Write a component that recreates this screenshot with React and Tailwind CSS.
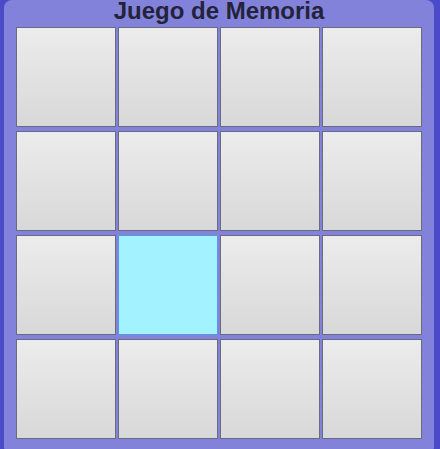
export default function App() {
  const cells = Array.from({ length: 16 }, (_, i) => i);
  return (
    <div className="min-h-[449px] w-[440px] overflow-hidden bg-[#4b4bc9]" style={{ fontFamily: '"Liberation Sans", Arial, sans-serif' }}>
      <div className="ml-[4px] w-[430px] rounded-[8px] bg-[#8282da] px-[12px] pb-[16px]">
        <div className="h-[27px] text-center text-[24px] font-bold leading-[21px] text-[#23233a]">Juego de Memoria</div>
        <div className="grid grid-cols-[repeat(4,100px)] gap-x-[2px] gap-y-[4px]">
          {cells.map((i) =>
            i === 9 ? (
              <div key={i} className="h-[100px] w-[100px] border border-[#5b95e6] bg-[#a3f2ff]" />
            ) : (
              <div key={i} className="h-[100px] w-[100px] border border-[#6b6b80] bg-linear-to-b from-[#ececec] to-[#d8d8d8]" />
            )
          )}
        </div>
      </div>
    </div>
  );
}
